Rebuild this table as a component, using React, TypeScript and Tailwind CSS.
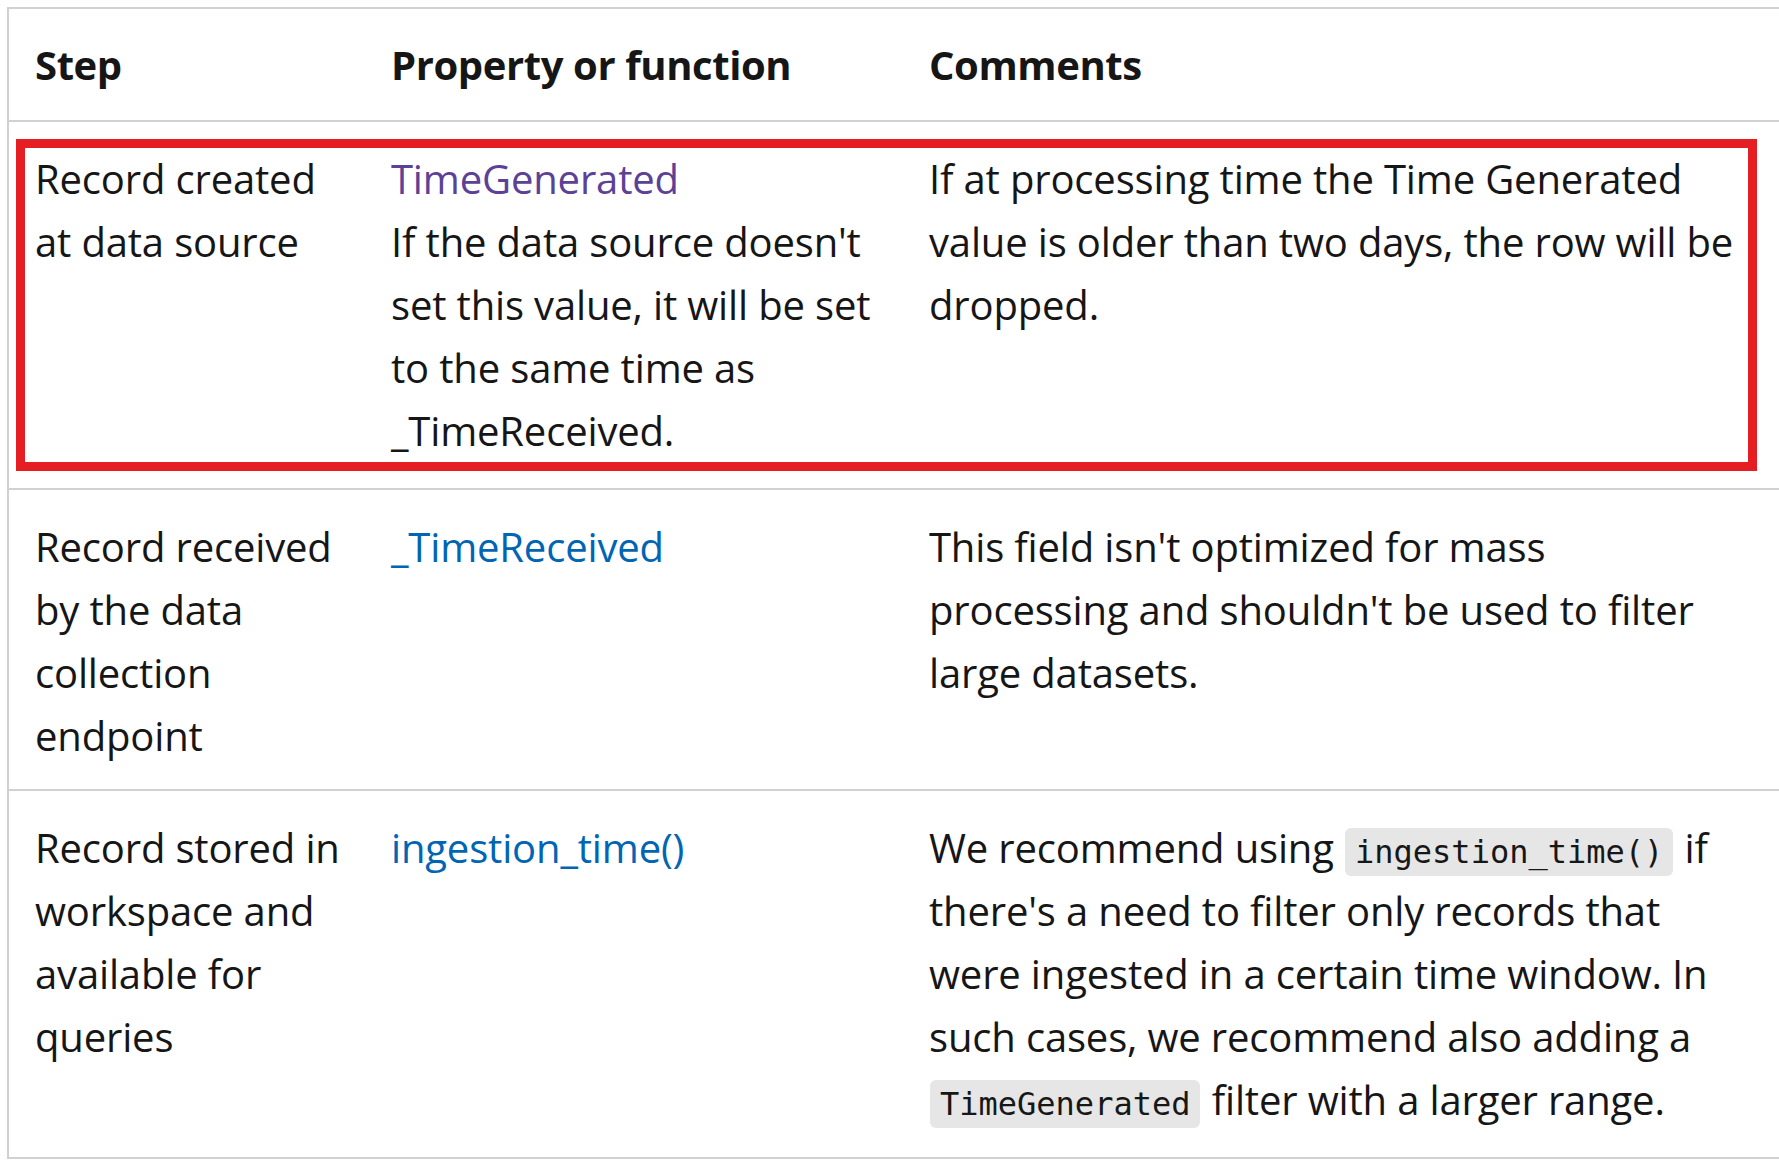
import React from "react";

function Code({ children }: { children: React.ReactNode }) {
  return (
    <code className="mx-[1px] rounded-[6px] bg-[#e6e6e6] px-[10px] py-[5px] font-['DejaVu_Sans_Mono',monospace] text-[32px] leading-none tracking-normal text-[#171717]">
      {children}
    </code>
  );
}

const rows = [
  {
    step: "Record created at data source",
    prop: (
      <>
        <span className="text-[#5c4196]">TimeGenerated</span>
        <br />
        If the data source doesn't set this value, it will be set to the same time as _TimeReceived.
      </>
    ),
    comments: <>If at processing time the Time Generated value is older than two days, the row will be dropped.</>,
    marked: true,
    pb: "pb-[26px]",
  },
  {
    step: "Record received by the data collection endpoint",
    prop: <span className="text-[#0065b3]">_TimeReceived</span>,
    comments: <>This field isn't optimized for mass processing and shouldn't be used to filter large datasets.</>,
    pb: "pb-[22px]",
  },
  {
    step: "Record stored in workspace and available for queries",
    prop: <span className="text-[#0065b3]">ingestion_time()</span>,
    comments: (
      <>
        We recommend using <Code>ingestion_time()</Code> if there's a need to filter only records that were ingested in
        a certain time window. In such cases, we recommend also adding a <Code>TimeGenerated</Code> filter with a larger
        range.
      </>
    ),
    pb: "pb-[26px]",
  },
];

export default function App() {
  return (
    <div className="h-screen w-full overflow-hidden bg-white pl-[7px] pt-[7px] font-['Open_Sans',sans-serif] text-[40px] leading-[63px] tracking-[-0.004em] text-[#161616]">
      <div className="w-[1781px] border-2 border-[#d1d1d1]">
        {/* header */}
        <div className="grid grid-cols-[356px_538px_1fr] border-b-2 border-[#d1d1d1] font-bold tracking-[-0.01em]">
          <div className="px-[26px] pt-[24px] pb-[24px]">Step</div>
          <div className="px-[26px] pt-[24px] pb-[24px]">Property or function</div>
          <div className="px-[26px] pt-[24px] pb-[24px]">Comments</div>
        </div>

        {rows.map((r, i) => (
          <div
            key={i}
            className={
              "relative grid grid-cols-[356px_538px_1fr] " +
              (i < rows.length - 1 ? "border-b-2 border-[#d1d1d1]" : "")
            }
          >
            <div className={"pl-[26px] pr-[14px] pt-[25px] " + r.pb}>{r.step}</div>
            <div className={"px-[26px] pt-[25px] " + r.pb}>{r.prop}</div>
            <div className={"pl-[26px] pr-[36px] pt-[25px] " + r.pb}>{r.comments}</div>
            {r.marked && (
              <div className="pointer-events-none absolute left-[7px] top-[17px] bottom-[17px] w-[1741px] border-[9px] border-[#e41e22]" />
            )}
          </div>
        ))}
      </div>
    </div>
  );
}
